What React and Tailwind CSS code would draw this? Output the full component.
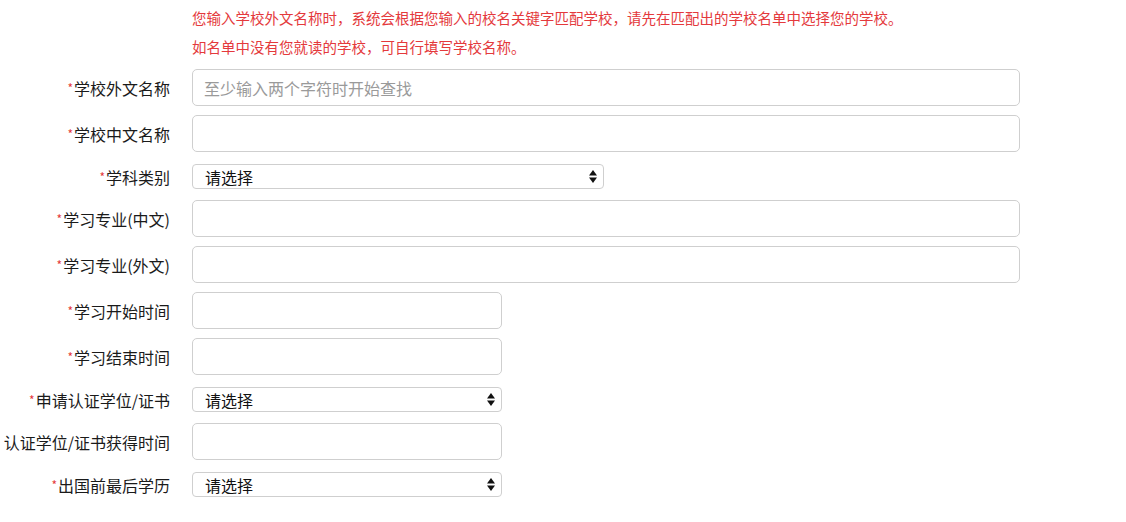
const font = { fontFamily: '"PingFang SC", "Noto Sans CJK SC", "Noto Sans", sans-serif' };

function Label({ text, required }) {
  return (
    <div className="w-[170px] shrink-0 text-right text-[16px] text-[#1a1a1a] whitespace-nowrap flex justify-end items-center">
      {required && <span className="text-[#e4393c] text-[12px] self-start mt-[3px] mr-[1px]">*</span>}
      <span>{text}</span>
    </div>
  );
}

function TextRow({ label, required = true, wide = true, placeholder }) {
  return (
    <div className="flex items-center pb-[9px]">
      <Label text={label} required={required} />
      <input
        type="text"
        placeholder={placeholder}
        className={`${wide ? 'w-[828px]' : 'w-[310px]'} ml-[22px] h-[37px] border border-[#cfcfcf] rounded-[5px] px-[11px] text-[16px] text-[#333] placeholder:text-[#9a9a9a] bg-white outline-none`}
        style={font}
      />
    </div>
  );
}

function Arrows() {
  return (
    <svg width="8" height="13" viewBox="0 0 8 13" className="absolute right-[7px] top-[6px]">
      <path d="M4 0 L8 5.5 L0 5.5 Z" fill="#111" />
      <path d="M0 7.5 L8 7.5 L4 13 Z" fill="#111" />
    </svg>
  );
}

function SelectRow({ label, width }) {
  return (
    <div className="flex items-center pt-[3px] pb-[11px]">
      <Label text={label} required />
      <div className={`relative ml-[22px] ${width}`}>
        <select
          className="appearance-none w-full h-[25px] border border-[#cfcfcf] rounded-[4px] pl-[12px] text-[16px] text-[#111] bg-white outline-none"
          style={font}
          defaultValue=""
        >
          <option value="">请选择</option>
        </select>
        <Arrows />
      </div>
    </div>
  );
}

export default function App() {
  return (
    <div className="w-[1126px] h-[522px] bg-white overflow-hidden" style={font}>
      <div className="pl-[192px] pt-[3px] pb-[8px] text-[14.5px] leading-[29px] text-[#e4393c]">
        <p>您输入学校外文名称时，系统会根据您输入的校名关键字匹配学校，请先在匹配出的学校名单中选择您的学校。</p>
        <p>如名单中没有您就读的学校，可自行填写学校名称。</p>
      </div>
      <TextRow label="学校外文名称" placeholder="至少输入两个字符时开始查找" />
      <TextRow label="学校中文名称" />
      <SelectRow label="学科类别" width="w-[412px]" />
      <TextRow label="学习专业(中文)" />
      <TextRow label="学习专业(外文)" />
      <TextRow label="学习开始时间" wide={false} />
      <TextRow label="学习结束时间" wide={false} />
      <SelectRow label="申请认证学位/证书" width="w-[310px]" />
      <TextRow label="认证学位/证书获得时间" required={false} wide={false} />
      <SelectRow label="出国前最后学历" width="w-[310px]" />
    </div>
  );
}
